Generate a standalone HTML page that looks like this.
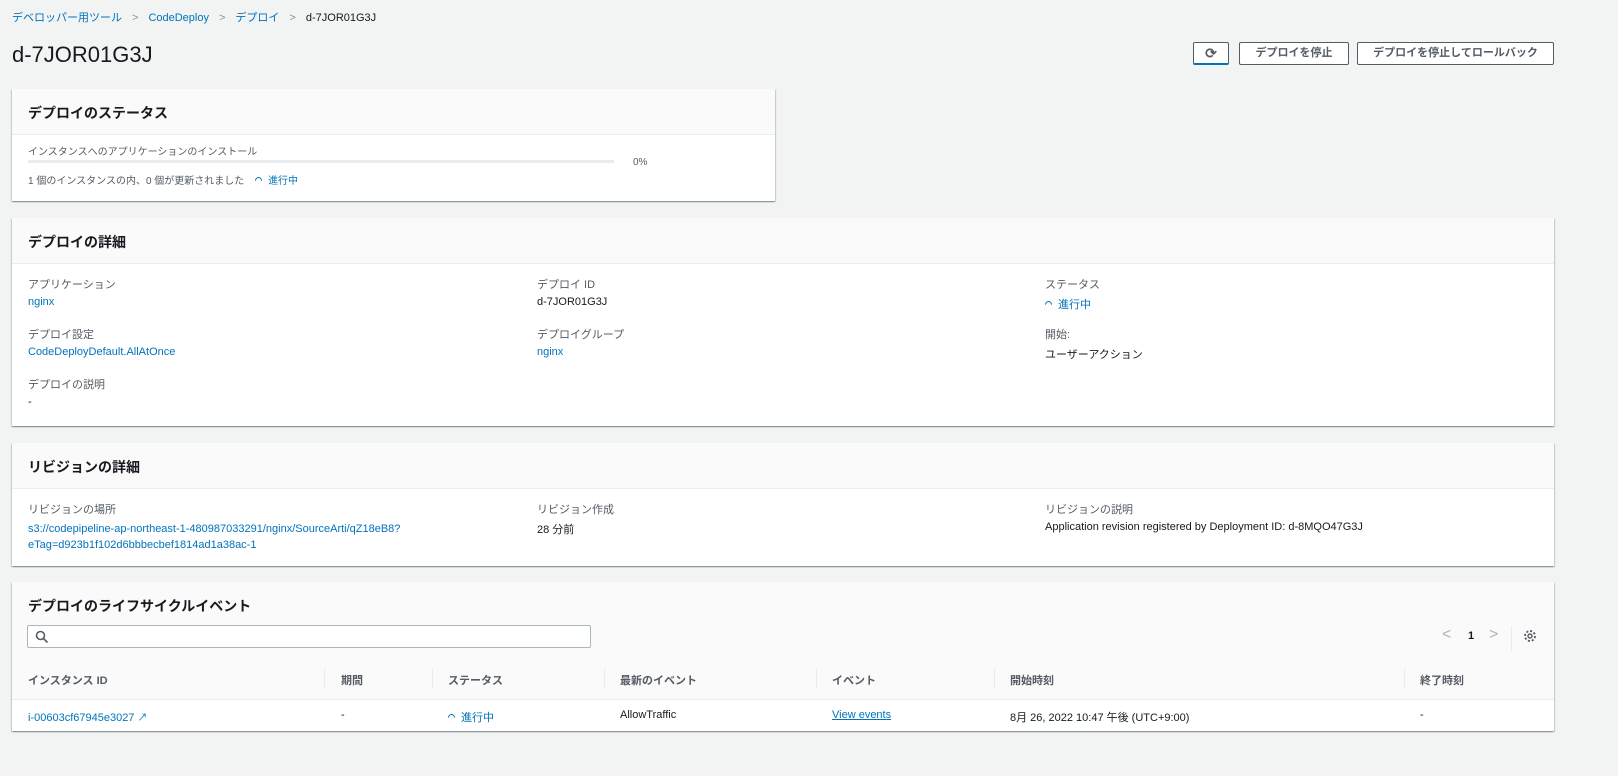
<!DOCTYPE html>
<html><head><meta charset="utf-8"><style>
*{box-sizing:border-box;margin:0;padding:0}
body{width:1618px;height:776px;background:#f2f3f3;font-family:"Liberation Sans","Noto Sans CJK JP",sans-serif;font-size:11px;color:#16191f;position:relative;overflow:hidden}
.a{position:absolute;white-space:nowrap}
a,.lk{color:#0073bb;text-decoration:none}
.p{position:absolute;background:#fff;box-shadow:0 1px 1px rgba(0,28,36,.3),1px 1px 1px rgba(0,28,36,.15),-1px 1px 1px rgba(0,28,36,.15)}
.h{position:absolute;left:0;right:0;top:0;background:#fafafa;border-bottom:1px solid #eaeded}
.h span{position:absolute;left:16px;font-size:14px;font-weight:bold}
.l{color:#545b64}
.btn{position:absolute;top:42px;height:23px;border:1px solid #545b64;background:#fff;font-size:11px;font-weight:bold;color:#545b64;text-align:center;line-height:21px;border-radius:2px}
.sp{display:inline-block;width:7px;height:7px;border:1.3px solid #0073bb;border-radius:50%;border-bottom-color:transparent;border-left-color:transparent;transform:rotate(-45deg);margin-right:6px;vertical-align:0}
.th{position:absolute;top:672px;font-weight:bold;color:#545b64}
.sep{position:absolute;top:668px;width:1px;height:20px;background:#eaeded}
</style></head><body>
<div class="a" style="left:12px;top:9px"><span class="lk">デベロッパー用ツール</span><span style="color:#879596;margin:0 10px">&gt;</span><span class="lk">CodeDeploy</span><span style="color:#879596;margin:0 10px">&gt;</span><span class="lk">デプロイ</span><span style="color:#879596;margin:0 10px">&gt;</span><span>d-7JOR01G3J</span></div>
<div class="a" style="left:12px;top:42px;font-size:22px">d-7JOR01G3J</div>
<div class="btn" style="left:1193px;width:36px;border-bottom:2px solid #0073bb;font-size:14px;line-height:20px">⟳</div>
<div class="btn" style="left:1239px;width:110px">デプロイを停止</div>
<div class="btn" style="left:1357px;width:197px">デプロイを停止してロールバック</div>

<div class="p" style="left:12px;top:89px;width:763px;height:112px">
<div class="h" style="height:46px"><span style="top:14px">デプロイのステータス</span></div>
<div class="a l" style="left:16px;top:54px;font-size:10px">インスタンスへのアプリケーションのインストール</div>
<div class="a" style="left:16px;top:71px;width:586px;height:3px;background:#eaeded"></div>
<div class="a l" style="left:621px;top:68px;font-size:10px">0%</div>
<div class="a l" style="left:16px;top:83px;font-size:10px">1 個のインスタンスの内、0 個が更新されました <span class="lk" style="margin-left:8px"><span class="sp"></span>進行中</span></div>
</div>

<div class="p" style="left:12px;top:218px;width:1542px;height:208px">
<div class="h" style="height:46px"><span style="top:14px">デプロイの詳細</span></div>
<div class="a l" style="left:16px;top:58px">アプリケーション</div><div class="a lk" style="left:16px;top:78px">nginx</div>
<div class="a l" style="left:16px;top:108px">デプロイ設定</div><div class="a lk" style="left:16px;top:128px">CodeDeployDefault.AllAtOnce</div>
<div class="a l" style="left:16px;top:158px">デプロイの説明</div><div class="a" style="left:16px;top:178px">-</div>
<div class="a l" style="left:525px;top:58px">デプロイ ID</div><div class="a" style="left:525px;top:78px">d-7JOR01G3J</div>
<div class="a l" style="left:525px;top:108px">デプロイグループ</div><div class="a lk" style="left:525px;top:128px">nginx</div>
<div class="a l" style="left:1033px;top:58px">ステータス</div><div class="a lk" style="left:1033px;top:78px"><span class="sp"></span>進行中</div>
<div class="a l" style="left:1033px;top:108px">開始:</div><div class="a" style="left:1033px;top:128px">ユーザーアクション</div>
</div>

<div class="p" style="left:12px;top:443px;width:1542px;height:123px">
<div class="h" style="height:46px"><span style="top:14px">リビジョンの詳細</span></div>
<div class="a l" style="left:16px;top:58px">リビジョンの場所</div>
<div class="a lk" style="left:16px;top:78px;line-height:16px">s3://codepipeline-ap-northeast-1-480987033291/nginx/SourceArti/qZ18eB8?<br>eTag=d923b1f102d6bbbecbef1814ad1a38ac-1</div>
<div class="a l" style="left:525px;top:58px">リビジョン作成</div><div class="a" style="left:525px;top:78px">28 分前</div>
<div class="a l" style="left:1033px;top:58px">リビジョンの説明</div><div class="a" style="left:1033px;top:78px">Application revision registered by Deployment ID: d-8MQO47G3J</div>
</div>

<div class="p" style="left:12px;top:582px;width:1542px;height:149px">
<div class="h" style="height:118px;border-bottom:1px solid #eaeded"><span style="top:14px">デプロイのライフサイクルイベント</span></div>
<div class="a" style="left:15px;top:43px;width:564px;height:23px;border:1px solid #aab7b8;background:#fff;border-radius:2px">
<svg width="14" height="14" style="position:absolute;left:7px;top:4px"><circle cx="5.5" cy="5.5" r="4" fill="none" stroke="#545b64" stroke-width="1.6"/><path d="M8.5 8.5L12.5 12.5" stroke="#545b64" stroke-width="1.6"/></svg></div>
<div class="a" style="left:1430px;top:44px;color:#aab7b8;font-size:16px">&lt;</div>
<div class="a" style="left:1456px;top:48px;font-weight:bold">1</div>
<div class="a" style="left:1477px;top:44px;color:#aab7b8;font-size:16px">&gt;</div>
<div class="a" style="left:1499px;top:44px;width:1px;height:26px;background:#eaeded"></div>
<svg class="a" style="left:1511px;top:47px" width="14" height="14" viewBox="0 0 14 14"><circle cx="7" cy="7" r="2" fill="none" stroke="#545b64" stroke-width="1.4"/><circle cx="7" cy="7" r="5" fill="none" stroke="#545b64" stroke-width="1.8" stroke-dasharray="2.2 1.7"/></svg>
<div class="a" style="left:0;right:0;top:118px;height:31px"></div>
</div>
<div class="th" style="left:28px">インスタンス ID</div>
<div class="sep" style="left:324px"></div><div class="th" style="left:341px">期間</div>
<div class="sep" style="left:432px"></div><div class="th" style="left:448px">ステータス</div>
<div class="sep" style="left:604px"></div><div class="th" style="left:620px">最新のイベント</div>
<div class="sep" style="left:816px"></div><div class="th" style="left:832px">イベント</div>
<div class="sep" style="left:994px"></div><div class="th" style="left:1010px">開始時刻</div>
<div class="sep" style="left:1404px"></div><div class="th" style="left:1420px">終了時刻</div>
<div class="a lk" style="left:28px;top:709px">i-00603cf67945e3027 <span style="font-size:10px">↗</span></div>
<div class="a" style="left:341px;top:709px">-</div>
<div class="a lk" style="left:448px;top:709px"><span class="sp"></span>進行中</div>
<div class="a" style="left:620px;top:709px">AllowTraffic</div>
<div class="a lk" style="left:832px;top:709px;text-decoration:underline">View events</div>
<div class="a" style="left:1010px;top:709px">8月 26, 2022 10:47 午後 (UTC+9:00)</div>
<div class="a" style="left:1420px;top:709px">-</div>
</body></html>
